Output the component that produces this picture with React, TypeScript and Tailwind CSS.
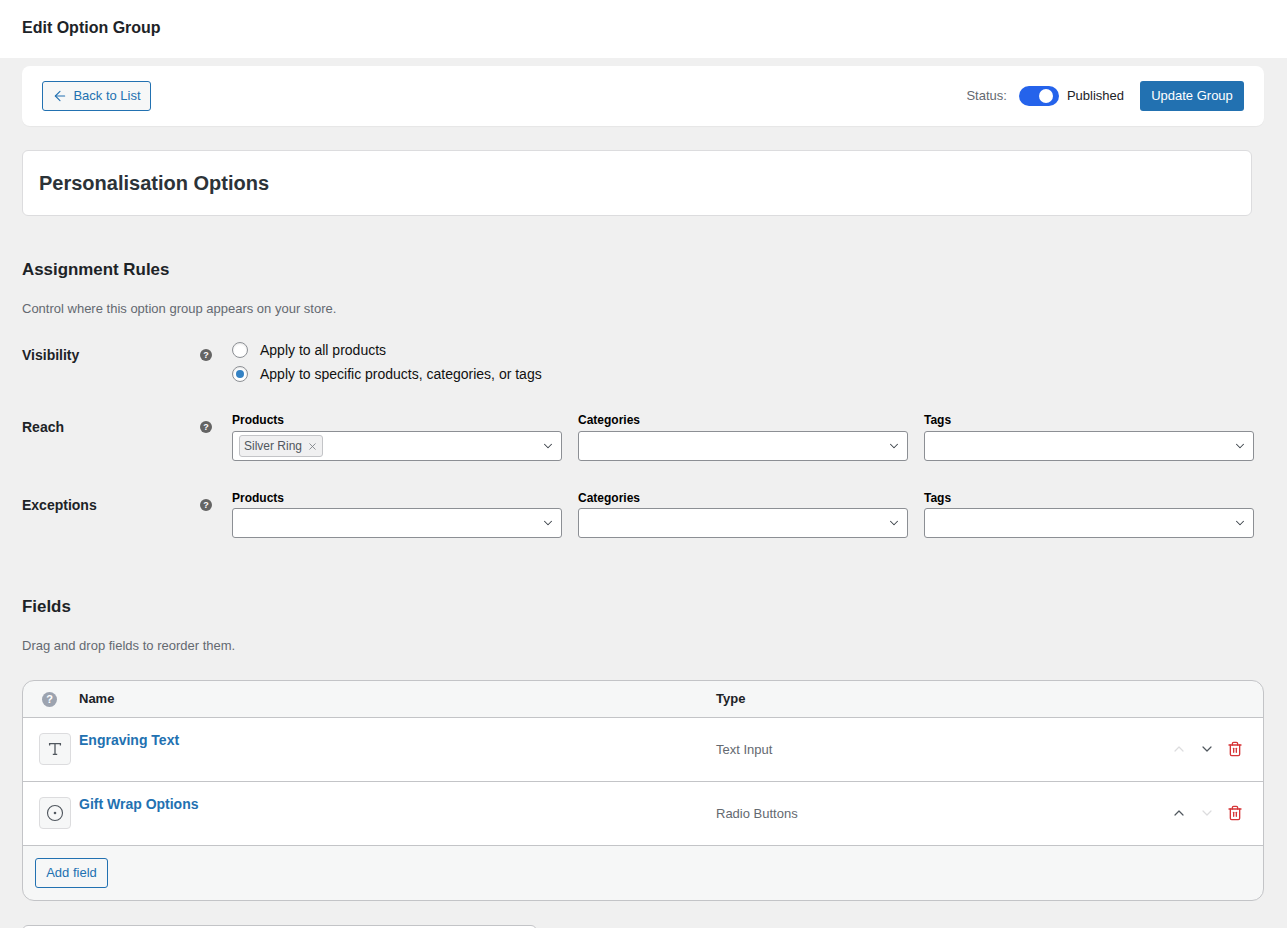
import { ArrowLeft, ChevronDown, ChevronUp, CircleDot, Trash2, X } from "lucide-react";

function HelpDot({ className = "" }: { className?: string }) {
  return (
    <span className={"flex items-center justify-center rounded-full bg-[#646464] text-white font-bold " + className}>
      ?
    </span>
  );
}

function SelectBox({ label, tag, gap = "mb-[3px]" }: { label: string; tag?: string; gap?: string }) {
  return (
    <div className="w-[330px]">
      <div className={"text-[12px] leading-[16px] font-bold text-black " + gap}>{label}</div>
      <div className="h-[30px] bg-white border border-[#8c8f94] rounded-[3px] flex items-center pl-[6px] pr-[6px]">
        {tag && (
          <span className="h-[22px] flex items-center gap-[5px] pl-[4px] pr-[4px] bg-[#f0f0f1] border border-[#c3c4c7] rounded-[3px] text-[12px] text-[#50575e]">
            {tag}
            <X size={11} strokeWidth={1.8} className="text-[#787c82]" />
          </span>
        )}
        <ChevronDown size={14} strokeWidth={1.8} className="ml-auto text-[#3c434a]" />
      </div>
    </div>
  );
}

function Row({ label, helpClass, children }: { label: string; helpClass: string; children: React.ReactNode }) {
  return (
    <div className="flex">
      <div className={"w-[210px] flex items-center justify-between pr-[20px] h-[16px] " + helpClass}>
        <span className="text-[14px] font-bold text-[#1d2327]">{label}</span>
        <HelpDot className="w-[12px] h-[12px] text-[9px] leading-none" />
      </div>
      {children}
    </div>
  );
}

function FieldRow({
  name,
  type,
  icon,
  upOn,
  downOn,
}: {
  name: string;
  type: string;
  icon: React.ReactNode;
  upOn: boolean;
  downOn: boolean;
}) {
  return (
    <div className="h-[64px] bg-white border-b border-[#c3c4c7] flex relative">
      <div className="ml-[16px] mt-[15px] w-[32px] h-[32px] bg-[#f6f7f7] border border-[#dcdcde] rounded-[4px] flex items-center justify-center text-[#50575e]">
        {icon}
      </div>
      <a className="ml-[8px] mt-[13px] w-[637px] h-[18px] text-[14px] leading-[18px] font-bold text-[#2271b1]">{name}</a>
      <span className="mt-[23px] text-[13px] leading-[18px] text-[#646970]">{type}</span>
      <div className="ml-auto mr-[20px] mt-[22px] h-[18px] flex items-center gap-[12px]">
        <ChevronUp size={16} strokeWidth={1.8} className={upOn ? "text-[#50575e]" : "text-[#dcdcde]"} />
        <ChevronDown size={16} strokeWidth={1.8} className={downOn ? "text-[#50575e]" : "text-[#dcdcde]"} />
        <Trash2 size={16} strokeWidth={2} className="text-[#d63638]" />
      </div>
    </div>
  );
}

export default function App() {
  return (
    <div className="h-[928px] overflow-hidden bg-[#f0f0f0] font-['Liberation_Sans',Arial,sans-serif] text-[13px] text-[#1d2327]">
      {/* Page header */}
      <div className="h-[58px] bg-white flex items-center px-[22px]">
        <h1 className="text-[16px] font-bold text-[#1d2327] -mt-[3px]">Edit Option Group</h1>
      </div>

      <div className="px-[22px] pt-[8px]">
        {/* Top action bar */}
        <div className="w-[1242px] h-[60px] bg-white rounded-[8px] shadow-[0_1px_1px_rgba(0,0,0,0.04)] flex items-center px-[20px]">
          <button className="h-[30px] w-[109px] border border-[#2271b1] rounded-[3px] bg-[#f6f7f7] text-[#2271b1] flex items-center justify-center gap-[5px]">
            <ArrowLeft size={16} strokeWidth={1.6} />
            Back to List
          </button>
          <span className="ml-auto text-[#646970]">Status:</span>
          <span className="ml-[12px] w-[40px] h-[20px] rounded-full bg-[#2563eb] flex items-center justify-end pr-[6px]">
            <span className="w-[14px] h-[14px] rounded-full bg-white" />
          </span>
          <span className="ml-[8px] text-[#1d2327]">Published</span>
          <button className="ml-[16px] h-[30px] w-[104px] rounded-[3px] bg-[#2271b1] text-white">Update Group</button>
        </div>

        {/* Group title */}
        <div className="mt-[24px] w-[1230px] h-[66px] bg-white border border-[#dcdcde] rounded-[6px] flex items-center px-[16px]">
          <h2 className="text-[20px] font-bold text-[#2c3338]">Personalisation Options</h2>
        </div>

        {/* Assignment rules */}
        <h3 className="mt-[44px] text-[16.9px] leading-[20px] font-bold text-[#1d2327]">Assignment Rules</h3>
        <p className="mt-[20px] text-[13px] leading-[18px] text-[#646970]">Control where this option group appears on your store.</p>

        <div className="mt-[23px]">
          <Row label="Visibility" helpClass="mt-[6px]">
            <div className="flex flex-col gap-[6px] text-[14px] text-[#111]">
              <label className="h-[18px] flex items-center gap-[12px]">
                <span className="w-[16px] h-[16px] rounded-full bg-white border border-[#8c8f94] shadow-[inset_0_1px_2px_rgba(0,0,0,0.1)]" />
                Apply to all products
              </label>
              <label className="h-[18px] flex items-center gap-[12px]">
                <span className="w-[16px] h-[16px] rounded-full bg-white border border-[#8c8f94] shadow-[inset_0_1px_2px_rgba(0,0,0,0.1)] flex items-center justify-center">
                  <span className="w-[8px] h-[8px] rounded-full bg-[#3582c4]" />
                </span>
                Apply to specific products, categories, or tags
              </label>
            </div>
          </Row>
        </div>

        <div className="mt-[29px]">
          <Row label="Reach" helpClass="mt-[7px]">
            <div className="flex gap-[16px]">
              <SelectBox label="Products" tag="Silver Ring" />
              <SelectBox label="Categories" />
              <SelectBox label="Tags" />
            </div>
          </Row>
        </div>

        <div className="mt-[29px]">
          <Row label="Exceptions" helpClass="mt-[7px]">
            <div className="flex gap-[16px]">
              <SelectBox label="Products" gap="mb-[2px]" />
              <SelectBox label="Categories" gap="mb-[2px]" />
              <SelectBox label="Tags" gap="mb-[2px]" />
            </div>
          </Row>
        </div>

        {/* Fields */}
        <h3 className="mt-[59px] text-[16.9px] leading-[20px] font-bold text-[#1d2327]">Fields</h3>
        <p className="mt-[20px] text-[13px] leading-[18px] text-[#646970]">Drag and drop fields to reorder them.</p>

        <div className="mt-[25px] w-[1242px] border border-[#c3c4c7] rounded-[12px] overflow-hidden bg-[#f6f7f7]">
          <div className="h-[37px] border-b border-[#c3c4c7] flex items-center text-[13px] font-bold text-[#1d2327]">
            <span className="ml-[19px] w-[15px] h-[15px] rounded-full bg-[#9ca3af] text-white text-[11px] flex items-center justify-center">?</span>
            <span className="ml-[22px] w-[637px]">Name</span>
            <span>Type</span>
          </div>
          <FieldRow
            name="Engraving Text"
            type="Text Input"
            icon={
              <svg width="16" height="16" viewBox="0 0 16 16" fill="none" stroke="currentColor" strokeWidth="1.3">
                <path d="M2.6 4.6V2.6h10.8v2M8 2.6v10.8M5.8 13.4h4.4" />
              </svg>
            }
            upOn={false}
            downOn
          />
          <FieldRow
            name="Gift Wrap Options"
            type="Radio Buttons"
            icon={<CircleDot size={18} strokeWidth={1.5} />}
            upOn
            downOn={false}
          />
          <div className="h-[54px] flex items-center px-[12px]">
            <button className="h-[30px] w-[73px] border border-[#2271b1] rounded-[3px] bg-[#f6f7f7] text-[#2271b1]">Add field</button>
          </div>
        </div>

        <div className="mt-[24px] w-[515px] h-[60px] bg-white border border-[#c3c4c7] rounded-[6px]" />
      </div>
    </div>
  );
}
